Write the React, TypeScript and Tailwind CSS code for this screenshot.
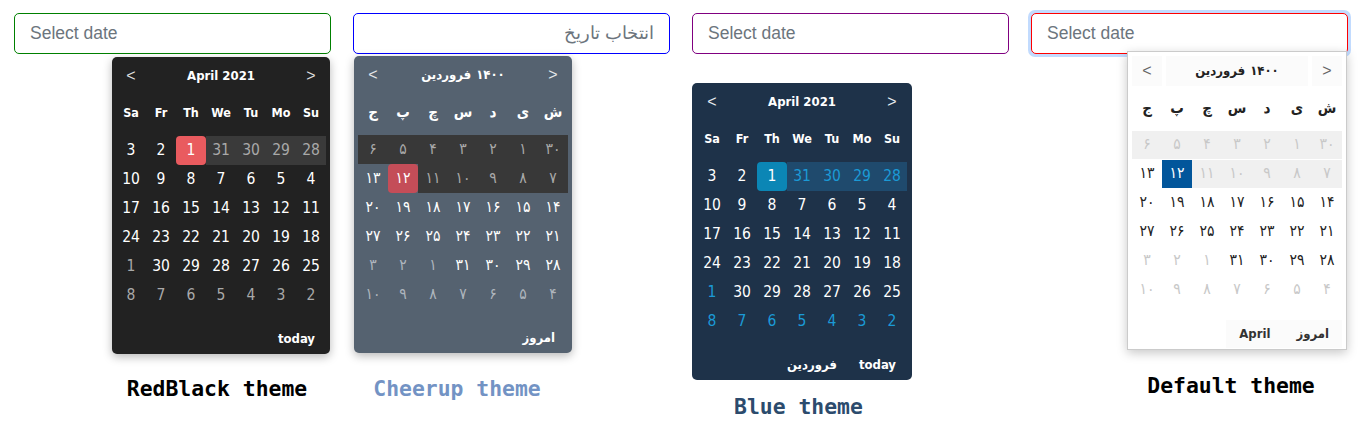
import React from 'react';

type Kind = 'n' | 'm' | 'd' | 's';
type Cell = [string, Kind];

const faDigits = '۰۱۲۳۴۵۶۷۸۹';
const fa = (n: number) => String(n).replace(/\d/g, (d) => faDigits[+d]);

const enRows: Cell[][] = [
  [['3', 'n'], ['2', 'n'], ['1', 's'], ['31', 'd'], ['30', 'd'], ['29', 'd'], ['28', 'd']],
  [10, 9, 8, 7, 6, 5, 4].map((n) => [String(n), 'n'] as Cell),
  [17, 16, 15, 14, 13, 12, 11].map((n) => [String(n), 'n'] as Cell),
  [24, 23, 22, 21, 20, 19, 18].map((n) => [String(n), 'n'] as Cell),
  [['1', 'm'], ...[30, 29, 28, 27, 26, 25].map((n) => [String(n), 'n'] as Cell)],
  [8, 7, 6, 5, 4, 3, 2].map((n) => [String(n), 'm'] as Cell),
];

const faRows: Cell[][] = [
  [6, 5, 4, 3, 2, 1, 30].map((n) => [fa(n), 'd'] as Cell),
  [[fa(13), 'n'], [fa(12), 's'], ...[11, 10, 9, 8, 7].map((n) => [fa(n), 'd'] as Cell)],
  [20, 19, 18, 17, 16, 15, 14].map((n) => [fa(n), 'n'] as Cell),
  [27, 26, 25, 24, 23, 22, 21].map((n) => [fa(n), 'n'] as Cell),
  [...[3, 2, 1].map((n) => [fa(n), 'm'] as Cell), ...[31, 30, 29, 28].map((n) => [fa(n), 'n'] as Cell)],
  [10, 9, 8, 7, 6, 5, 4].map((n) => [fa(n), 'm'] as Cell),
];

type Theme = {
  box: string;
  arrow: string;
  arrowBtn: string;
  titleBtn: string;
  title: string;
  week: string;
  n: string;
  m: string;
  d: string;
  s: string;
  inner: string;
  footer: string;
  footerBtn: string;
};

const redBlack: Theme = {
  box: 'w-[218px] bg-[#222222] rounded-[5px] px-[4px] shadow-[0_3px_10px_rgba(0,0,0,0.28)]',
  arrow: 'text-[#dddddd]',
  arrowBtn: '',
  titleBtn: '',
  title: 'text-white',
  week: 'text-white',
  n: 'text-white',
  m: 'text-[#a9a9a9]',
  d: 'text-[#a9a9a9] bg-[#3a3a3a]',
  s: 'text-white bg-[#e95b5f] rounded-[4px]',
  inner: 'h-full',
  footer: 'text-white',
  footerBtn: 'px-[11px]',
};

const cheerup: Theme = {
  box: 'w-[218px] bg-[#556270] rounded-[5px] px-[4px] shadow-[0_3px_10px_rgba(0,0,0,0.28)]',
  arrow: 'text-[#e4e7ea]',
  arrowBtn: '',
  titleBtn: '',
  title: 'text-white',
  week: 'text-white',
  n: 'text-white',
  m: 'text-[#aeb5bd]',
  d: 'text-[#a9a9a9] bg-[#383838]',
  s: 'text-white bg-[#c44d58] rounded-[4px]',
  inner: 'h-full',
  footer: 'text-white',
  footerBtn: 'px-[13px]',
};

const blue: Theme = {
  box: 'w-[220px] bg-[#1e3249] rounded-[5px] px-[5px]',
  arrow: 'text-[#e6ebf0]',
  arrowBtn: '',
  titleBtn: '',
  title: 'text-white',
  week: 'text-white',
  n: 'text-white',
  m: 'text-[#1b9ad6]',
  d: 'text-[#1b9ad6] bg-[#1f4a6d]',
  s: 'text-white bg-[#0b86b5] rounded-[4px]',
  inner: 'h-full',
  footer: 'text-white',
  footerBtn: 'px-[11px]',
};

const def: Theme = {
  box: 'w-[220px] bg-white border border-[#cbcbcb] px-[4px] shadow-[0_3px_10px_rgba(0,0,0,0.22)] relative z-10',
  arrow: 'text-[#666666]',
  arrowBtn: 'bg-[#fbfbfb]',
  titleBtn: 'bg-[#fbfbfb] mx-[4px]',
  title: 'text-[#222222]',
  week: 'text-[#222222]',
  n: 'text-[#222222]',
  m: 'text-[#c8c8c8]',
  d: 'text-[#c8c8c8] bg-[#f0f0f0]',
  s: 'text-white bg-[#02569b]',
  inner: 'h-[28px]',
  footer: 'text-[#333333]',
  footerBtn: 'px-[13px] bg-[#fbfbfb]',
};

const calFont = "[font-family:'DejaVu_Sans',sans-serif] [font-stretch:condensed]";

function Calendar({
  theme,
  title,
  weeks,
  rows,
  footer,
  persian,
}: {
  theme: Theme;
  title: React.ReactNode;
  weeks: string[];
  rows: Cell[][];
  footer: string[];
  persian?: boolean;
}) {
  return (
    <div className={`${theme.box} ${calFont} flex flex-col`}>
      <div className="h-[36px] flex items-start pt-[4px]">
        <div className={`w-[30px] h-[30px] flex items-center justify-center ${theme.arrowBtn}`}>
          <span className={`[font-family:'Liberation_Sans',sans-serif] text-[16px] leading-none ${theme.arrow}`}>&lt;</span>
        </div>
        <div className={`flex-1 h-[30px] flex items-center justify-center font-bold text-[13px] ${theme.titleBtn} ${theme.title}`}>
          {title}
        </div>
        <div className={`w-[30px] h-[30px] flex items-center justify-center ${theme.arrowBtn}`}>
          <span className={`[font-family:'Liberation_Sans',sans-serif] text-[16px] leading-none ${theme.arrow}`}>&gt;</span>
        </div>
      </div>
      <div className="h-[40px] grid grid-cols-7 items-center">
        {weeks.map((w, i) => (
          <div
            key={i}
            className={`text-center font-bold ${persian ? 'text-[15px]' : 'text-[12.5px]'} ${theme.week}`}
          >
            {w}
          </div>
        ))}
      </div>
      <div className="mt-[3px] flex flex-col">
        {rows.map((row, r) => (
          <div key={r} className="grid grid-cols-7 h-[29px]">
            {row.map(([t, k], c) => (
              <div key={c} className="h-[29px]">
                <div className={`${theme.inner} flex items-center justify-center text-[15.5px] ${theme[k]}`}>
                  {t}
                </div>
              </div>
            ))}
          </div>
        ))}
      </div>
      <div className="h-[44px] pt-[15px] flex justify-end">
        {footer.map((f, i) => (
          <div
            key={i}
            className={`h-[28px] flex items-center font-bold text-[13px] ${theme.footerBtn} ${theme.footer}`}
          >
            {f}
          </div>
        ))}
      </div>
    </div>
  );
}

const enWeeks = ['Sa', 'Fr', 'Th', 'We', 'Tu', 'Mo', 'Su'];
const faWeeks = ['ج', 'پ', 'چ', 'س', 'د', 'ی', 'ش'];

const faTitle = (
  <span className="flex items-center gap-[5px]" dir="ltr">
    <span>فروردین</span>
    <span>۱۴۰۰</span>
  </span>
);

const labelCls = "[font-family:'DejaVu_Sans_Mono',monospace] font-bold text-[21.4px] leading-[24px] whitespace-nowrap";
const inputCls =
  "block w-full h-[41px] border border-solid rounded-[5px] px-[15px] text-[17.5px] [font-family:'Liberation_Sans',sans-serif] placeholder:text-[#6c757d] outline-none bg-white";

export default function App() {
  return (
    <div className="w-[1363px] h-[433px] bg-white flex items-start gap-[22px] pl-[14px] pt-[13px]">
      <div className="w-[317px] flex flex-col">
        <input className={`${inputCls} [border-color:#008000]`} placeholder="Select date" />
        <div className="ml-[98px] mt-[3px] w-fit flex flex-col items-center">
          <Calendar theme={redBlack} title="April 2021" weeks={enWeeks} rows={enRows} footer={['today']} />
          <div className={`${labelCls} mt-[23px] pr-[8px] text-black`}>RedBlack theme</div>
        </div>
      </div>

      <div className="w-[317px] flex flex-col">
        <input dir="rtl" className={`${inputCls} [border-color:#0000ff]`} placeholder="انتخاب تاریخ" />
        <div className="ml-[1px] mt-[2px] w-fit flex flex-col items-center">
          <Calendar theme={cheerup} title={faTitle} weeks={faWeeks} rows={faRows} footer={['امروز']} persian />
          <div className={`${labelCls} mt-[24px] pr-[12px] text-[#7393c4]`}>Cheerup theme</div>
        </div>
      </div>

      <div className="w-[317px] flex flex-col">
        <input className={`${inputCls} [border-color:#800080]`} placeholder="Select date" />
        <div className="mt-[29px] w-fit flex flex-col items-center">
          <Calendar theme={blue} title="April 2021" weeks={enWeeks} rows={enRows} footer={['فروردین', 'today']} />
          <div className={`${labelCls} mt-[15px] pr-[7px] text-[#2c4b6d]`}>Blue theme</div>
        </div>
      </div>

      <div className="w-[317px] flex flex-col">
        <div className="rounded-[7px] p-[3px] m-[-3px] bg-[#c2dbfe]">
          <input className={`${inputCls} [border-color:#ff0000]`} placeholder="Select date" />
        </div>
        <div className="ml-[96px] mt-[-3px] w-fit flex flex-col items-center">
          <Calendar theme={def} title={faTitle} weeks={faWeeks} rows={faRows} footer={['April', 'امروز']} persian />
          <div className={`${labelCls} mt-[24px] pr-[12px] text-black`}>Default theme</div>
        </div>
      </div>
    </div>
  );
}
